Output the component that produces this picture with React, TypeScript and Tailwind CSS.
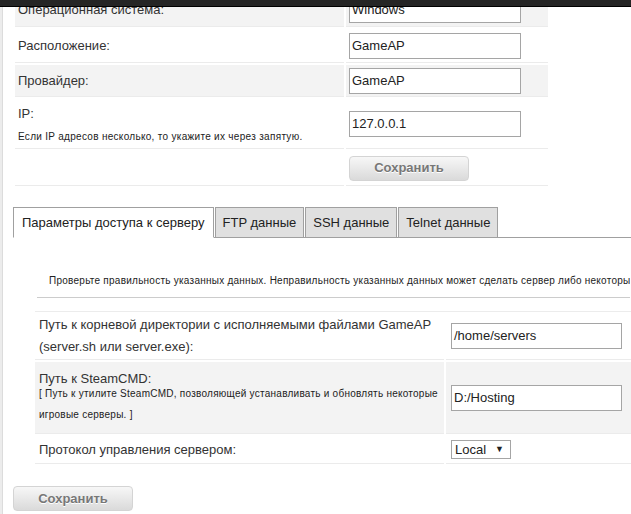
import React from "react";

const inputCls =
  "h-[26px] border border-[#a5a5a5] bg-white px-[2px] flex items-center text-[13px] text-[#222]";

function SaveButton() {
  return (
    <div className="w-[120px] h-[25px] rounded-[4px] border border-[#d4d4d4] bg-gradient-to-b from-[#f7f7f7] to-[#dadada] flex items-center justify-center text-[13px] font-bold text-[#777] [text-shadow:0_1px_0_#fff]">
      Сохранить
    </div>
  );
}

function TopRow({
  gray,
  h,
  label,
  children,
}: {
  gray?: boolean;
  h: string;
  label: React.ReactNode;
  children: React.ReactNode;
}) {
  const bg = gray ? "bg-[#f3f3f3]" : "bg-white";
  return (
    <div className={`flex gap-[2px] ${h}`}>
      <div className={`w-[329px] ${bg} border-b border-[#ebebeb] pl-[3px] flex flex-col justify-center`}>
        {label}
      </div>
      <div className={`w-[202px] ${bg} border-b border-[#ebebeb] pl-[3px] flex items-center`}>
        {children}
      </div>
    </div>
  );
}

function BottomRow({
  gray,
  h,
  label,
  children,
}: {
  gray?: boolean;
  h: string;
  label: React.ReactNode;
  children: React.ReactNode;
}) {
  const bg = gray ? "bg-[#f3f3f3]" : "bg-white";
  return (
    <div className={`flex gap-[2px] ${h}`}>
      <div className={`w-[409px] shrink-0 ${bg} border-b border-[#ebebeb] pl-[4px] flex flex-col justify-center`}>
        {label}
      </div>
      <div className={`w-[250px] shrink-0 ${bg} border-b border-[#ebebeb] pl-[5px] flex items-center`}>
        {children}
      </div>
    </div>
  );
}

export default function App() {
  return (
    <div className="relative w-[631px] h-[514px] overflow-hidden bg-white font-['Liberation_Sans',Arial,sans-serif] text-[13px] text-[#333]">
      <div className="absolute top-0 left-0 right-0 h-[7px] bg-[#252525] border-b border-black z-10" />
      <div className="flex h-full">
        <div className="w-[3px] shrink-0 bg-[#ececec] border-r border-[#dcdcdc]" />
        <div className="flex-1 -mt-[6px] min-w-0">
          {/* top table */}
          <div className="ml-[12px] w-[533px] flex flex-col gap-[2px]">
            <TopRow gray h="h-[33px]" label={<span className="leading-[18px]">Операционная система:</span>}>
              <div className={`${inputCls} w-[172px]`}>Windows</div>
            </TopRow>
            <TopRow h="h-[34px]" label={<span className="leading-[18px]">Расположение:</span>}>
              <div className={`${inputCls} w-[172px]`}>GameAP</div>
            </TopRow>
            <TopRow gray h="h-[32px]" label={<span className="leading-[18px]">Провайдер:</span>}>
              <div className={`${inputCls} w-[172px]`}>GameAP</div>
            </TopRow>
            <TopRow
              h="h-[50px]"
              label={
                <>
                  <div className="leading-[18px]">IP:</div>
                  <div className="mt-[8px] text-[10px] leading-[12px] tracking-[0.3px] text-[#222]">
                    Если IP адресов несколько, то укажите их через запятую.
                  </div>
                </>
              }
            >
              <div className={`${inputCls} w-[172px]`}>127.0.0.1</div>
            </TopRow>
            <TopRow h="h-[35px]" label={<span />}>
              <SaveButton />
            </TopRow>
          </div>

          {/* tabs */}
          <div className="ml-[10px] mt-[21px]">
            <div className="flex gap-px border-b border-[#a0a0a0] h-[31px]">
              <div className="h-[31px] px-[8px] border border-[#a0a0a0] border-b-white bg-white flex items-center text-[13px] text-[#222] whitespace-nowrap">
                Параметры доступа к серверу
              </div>
              <div className="h-[31px] -mb-px px-[7px] border border-[#a0a0a0] bg-[#e0e0e0] flex items-center text-[13px] text-[#222] whitespace-nowrap">
                FTP данные
              </div>
              <div className="h-[31px] -mb-px px-[7px] border border-[#a0a0a0] bg-[#e0e0e0] flex items-center text-[13px] text-[#222] whitespace-nowrap">
                SSH данные
              </div>
              <div className="h-[31px] -mb-px px-[7px] border border-[#a0a0a0] bg-[#e0e0e0] flex items-center text-[13px] text-[#222] whitespace-nowrap">
                Telnet данные
              </div>
            </div>

            {/* panel */}
            <div className="pl-[22px] pt-[35px]">
              <div className="ml-[2px] pl-[12px] pb-[8px] border-b border-[#cccccc] text-[10px] leading-[16px] tracking-[0.25px] text-[#222] whitespace-nowrap overflow-hidden w-[593px]">
                Проверьте правильность указанных данных. Неправильность указанных данных может сделать сервер либо некоторые его функции неработоспособными.
              </div>
              <div className="mt-[13px] h-px bg-[#ececec] w-[700px]" />
              <div className="mt-[1px] flex flex-col gap-[2px] w-[700px]">
                <BottomRow
                  h="h-[47px]"
                  label={
                    <>
                      <div className="leading-[22px]">Путь к корневой директории с исполняемыми файлами GameAP</div>
                      <div className="leading-[22px]">(server.sh или server.exe):</div>
                    </>
                  }
                >
                  <div className={`${inputCls} w-[171px]`}>/home/servers</div>
                </BottomRow>
                <BottomRow
                  gray
                  h="h-[72px]"
                  label={
                    <>
                      <div className="leading-[18px]">Путь к SteamCMD:</div>
                      <div className="-mt-[5px] text-[10px] leading-[21px] tracking-[0.25px] text-[#222]">
                        [ Путь к утилите SteamCMD, позволяющей устанавливать и обновлять некоторые
                        <br />
                        игровые серверы. ]
                      </div>
                    </>
                  }
                >
                  <div className={`${inputCls} w-[171px]`}>D:/Hosting</div>
                </BottomRow>
                <BottomRow h="h-[28px]" label={<div className="leading-[18px]">Протокол управления сервером:</div>}>
                  <div className="h-[19px] w-[60px] border border-[#a5a5a5] bg-white flex items-center justify-between pl-[3px] pr-[6px] text-[13px] text-[#222]">
                    <span>Local</span>
                    <span className="text-[9px] leading-none">▼</span>
                  </div>
                </BottomRow>
              </div>
            </div>
          </div>

          <div className="ml-[10px] mt-[22px]">
            <SaveButton />
          </div>
        </div>
      </div>
    </div>
  );
}
